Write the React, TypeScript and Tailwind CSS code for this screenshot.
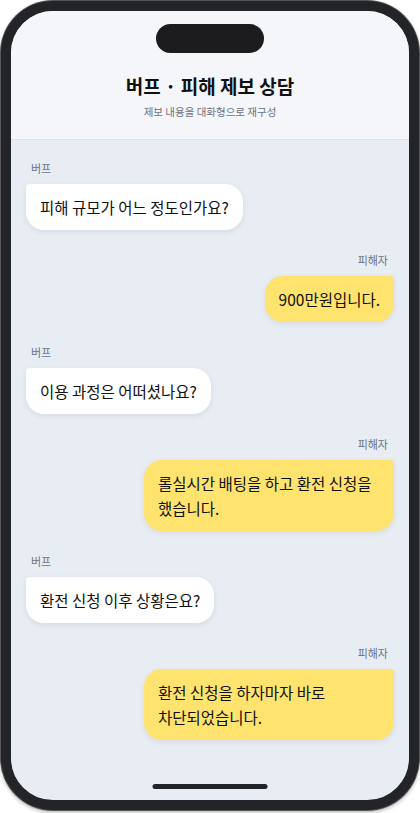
import React from "react";

type Msg = { from: "buff" | "victim"; text: string };

const messages: Msg[] = [
  { from: "buff", text: "피해 규모가 어느 정도인가요?" },
  { from: "victim", text: "900만원입니다." },
  { from: "buff", text: "이용 과정은 어떠셨나요?" },
  { from: "victim", text: "롤실시간 배팅을 하고 환전 신청을 했습니다." },
  { from: "buff", text: "환전 신청 이후 상황은요?" },
  { from: "victim", text: "환전 신청을 하자마자 바로 차단되었습니다." },
];

const font = { fontFamily: '"Noto Sans CJK KR", "Noto Sans", sans-serif' };

export default function App() {
  return (
    <div className="w-[420px] h-[813px] bg-white" style={font}>
      <div className="ml-[1px] mt-[1px] w-[418px] h-[809px] rounded-[52px] border-[10px] border-[#232428] ring-1 ring-[#55565a] shadow-[0_2px_4px_rgba(0,0,0,0.35)] overflow-hidden relative flex flex-col bg-[#e8edf4]">
        <header className="bg-[#f5f6fa] border-b border-[#dde2ea] flex flex-col items-center pt-[13px] pb-[19px]">
          <div className="w-[108px] h-[29px] rounded-full bg-[#1c1c1f]" />
          <h1 className="mt-[20px] text-[19px] leading-[26px] font-bold text-[#111111]">
            버프 · 피해 제보 상담
          </h1>
          <p className="mt-[5px] text-[10.5px] leading-[16px] text-[#6b7280]">
            제보 내용을 대화형으로 재구성
          </p>
        </header>
        <main className="flex-1 flex flex-col gap-[22px] px-[15px] pt-[20px]">
          {messages.map((m, i) =>
            m.from === "buff" ? (
              <div key={i} className="flex flex-col items-start">
                <span className="pl-[5px] text-[11px] leading-[16px] text-[#6b7280]">버프</span>
                <div className="mt-[8px] max-w-[250px] break-keep bg-white rounded-[18px] rounded-tl-[4px] px-[14px] py-[10.5px] text-[15.5px] leading-[25px] text-[#111111] shadow-[0_2px_6px_rgba(15,23,42,0.08)]">
                  {m.text}
                </div>
              </div>
            ) : (
              <div key={i} className="flex flex-col items-end">
                <span className="pr-[6px] text-[11px] leading-[16px] text-[#6b7280]">피해자</span>
                <div className="mt-[8px] max-w-[250px] break-keep bg-[#ffe36f] rounded-[18px] rounded-tr-[4px] px-[14px] py-[10.5px] text-[15.5px] leading-[25px] text-[#111111] shadow-[0_2px_6px_rgba(15,23,42,0.08)]">
                  {m.text}
                </div>
              </div>
            )
          )}
        </main>
        <div className="absolute bottom-[11px] left-1/2 -translate-x-1/2 w-[115px] h-[5px] rounded-full bg-[#232428]" />
      </div>
    </div>
  );
}
